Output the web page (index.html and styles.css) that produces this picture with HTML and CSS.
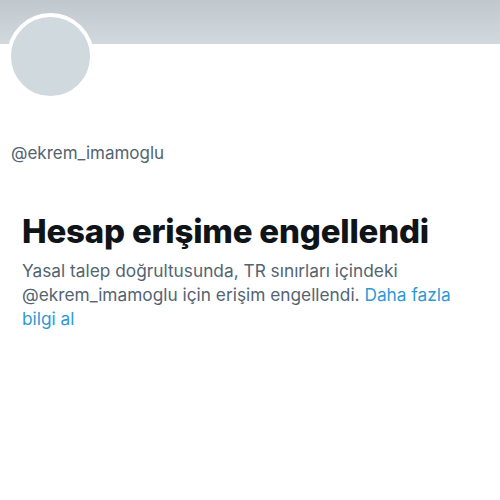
FILE: index.html
```html
<!DOCTYPE html>
<html lang="tr">
<head>
    <meta charset="UTF-8">
    <meta name="viewport" content="width=device-width, initial-scale=1.0">
    <title>@ekrem_imamoglu</title>
    <link rel="stylesheet" href="styles.css">
</head>
<body>

    <div class="banner"></div>

    <div class="profile">
        <div class="avatar"></div>
        <div class="handle">@ekrem_imamoglu</div>
    </div>

    <div class="notice">
        <h1 class="notice-title">Hesap erişime engellendi</h1>
        <p class="notice-text">
            Yasal talep doğrultusunda, TR sınırları içindeki @ekrem_imamoglu için erişim engellendi.
            <a class="link" href="#">Daha fazla bilgi al</a>
        </p>
    </div>

</body>
</html>
```

FILE: styles.css
```css
body {
    margin: 0;
    background-color: #ffffff;
    font-family: Inter, "Noto Sans", "Liberation Sans", sans-serif;
    color: #0f1419;
}
.banner {
    height: 44px;
    background: linear-gradient(to bottom, #c0c7cd, #d1d8de);
}
.profile {
    padding: 0 7px;
}
.avatar {
    width: 79px;
    height: 79px;
    margin-top: -31px;
    border: 4px solid #ffffff;
    border-radius: 50%;
    background-color: #cfd9de;
}
.handle {
    margin-top: 43px;
    padding-left: 4px;
    font-size: 17px;
    color: #536471;
}
.notice {
    padding: 0 22px;
    margin-top: 48px;
}
.notice-title {
    margin: 0;
    font-size: 33px;
    font-weight: 800;
    letter-spacing: -0.2px;
    line-height: 40px;
}
.notice-text {
    margin: 8px 0 0;
    font-size: 17.3px;
    line-height: 24px;
    color: #536471;
}
.link {
    color: #2d9ad6;
    text-decoration: none;
}
```
